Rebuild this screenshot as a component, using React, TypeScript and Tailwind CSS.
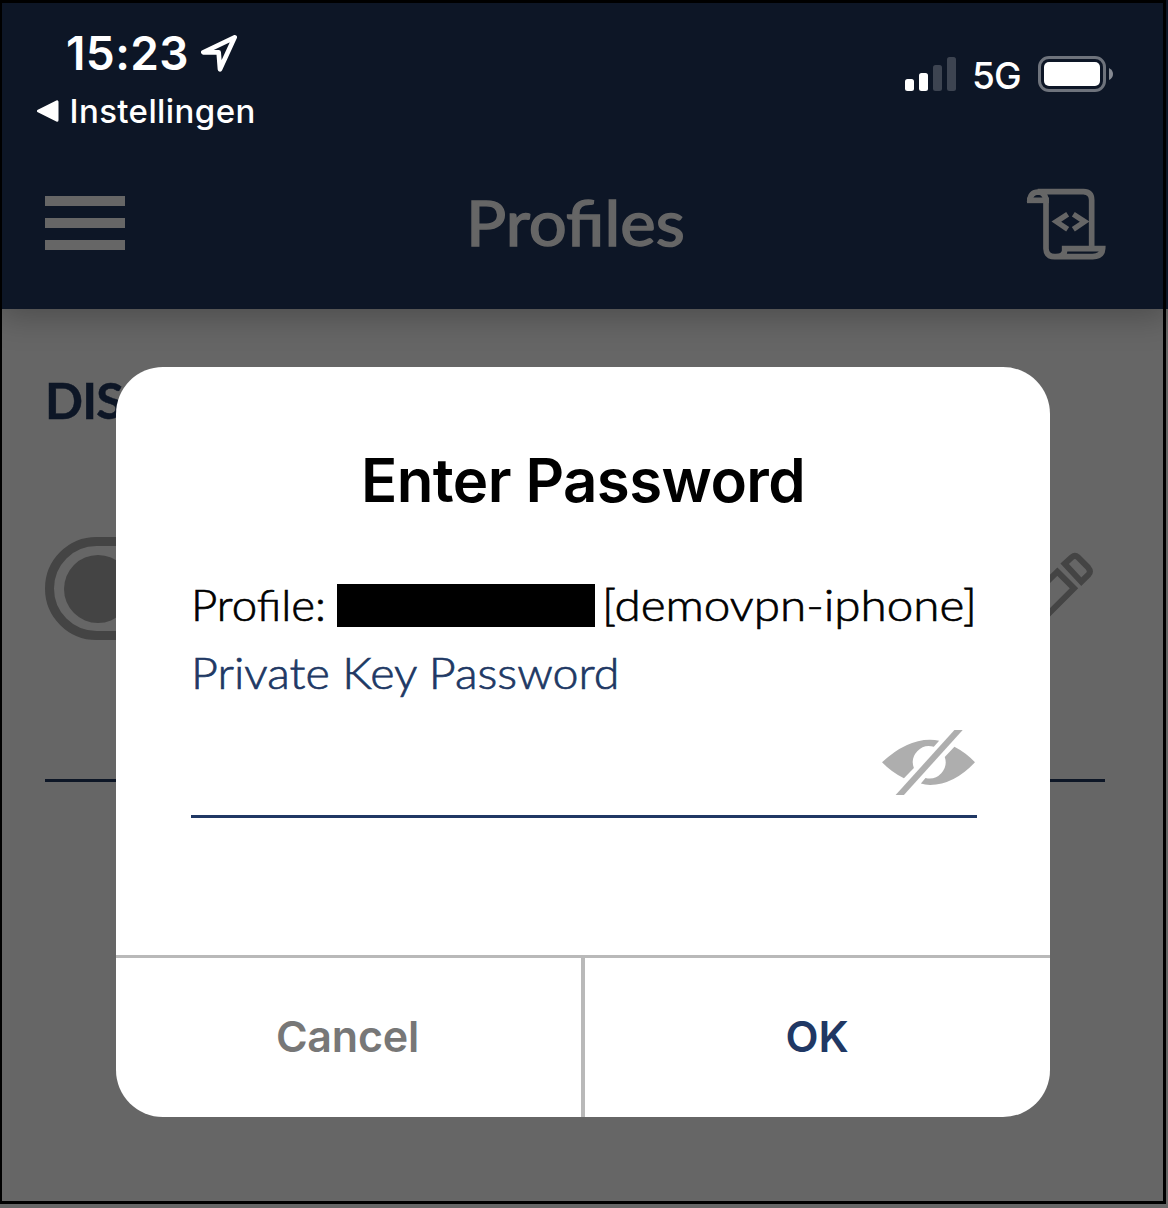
function StatusBar() {
  return (
    <div className="flex h-[150px] justify-between pl-[37px] pr-[55px] font-['Inter',sans-serif] text-white">
      <div className="pt-[28px]">
        <div className="flex h-[50px] items-center pl-[29px]">
          <span className="w-[135px] whitespace-nowrap text-[46px] font-semibold leading-[50px] tracking-[0.4px]">15:23</span>
          <svg className="h-[37px] w-[36px] shrink-0" viewBox="603 104 108 111" fill="none">
            <path d="M704 111 L610 156 H656 L660 207 Z" stroke="white" strokeWidth="14" strokeLinejoin="round" />
          </svg>
        </div>
        <div className="mt-[9px] flex h-[48px] items-center">
          <svg className="h-[22px] w-[22px] shrink-0" viewBox="0 0 22 22">
            <path d="M1.5 11 L20 1.8 V20.2 Z" fill="white" stroke="white" strokeWidth="3" strokeLinejoin="round" />
          </svg>
          <span className="ml-[10.5px] whitespace-nowrap text-[33px] font-medium leading-[48px] tracking-[0.4px]">Instellingen</span>
        </div>
      </div>
      <div className="box-content flex h-[40px] items-center pt-[54px]">
        <div className="flex h-[34px] items-end gap-[5px]">
          <span className="h-[12px] w-[9px] rounded-[2.5px] bg-white" />
          <span className="h-[18px] w-[9px] rounded-[2.5px] bg-white" />
          <span className="h-[26px] w-[9px] rounded-[2.5px] bg-[#3d4451]" />
          <span className="h-[34px] w-[9px] rounded-[2.5px] bg-[#3d4451]" />
        </div>
        <span className="ml-[16px] mt-[4px] w-[66px] whitespace-nowrap text-[37px] font-medium leading-[40px] tracking-[-0.8px]">5G</span>
        <div className="-mt-[1px] h-[36px] w-[68px] rounded-[11px] border-[3px] border-[#6e737c] p-[3px]">
          <div className="h-full rounded-[5px] bg-white" />
        </div>
        <svg className="ml-[3px] h-[12px] w-[4px]" viewBox="0 0 4 12">
          <path d="M0 0 Q4 2 4 6 T0 12 Z" fill="#868a92" />
        </svg>
      </div>
    </div>
  );
}

function ScrollIcon() {
  return (
    <svg className="mt-[2px] h-[73px] w-[82px]" viewBox="78 52 246 219" fill="none" stroke="#666666" strokeWidth="17">
      <path d="M113 63 H250 Q275 64 275 88 V232" />
      <path d="M81 89 H147" />
      <path d="M89 94 Q90 64 115 64 Q138 65 138 94 V234 Q139 258 164 258 H278 Q307 257 308 234 H194 V240 Q193 257 168 258" />
      <path d="M203 131 L169 153 L203 176 M220 131 L254 153 L220 176" strokeWidth="16" />
    </svg>
  );
}

function Header() {
  return (
    <header className="h-[309px] bg-[#0d1626] shadow-[0_8px_30px_rgba(0,0,0,0.25)]">
      <StatusBar />
      <div className="flex h-[146px] items-center justify-between pl-[45px] pr-[60px]">
        <div className="flex w-20 flex-col gap-3">
          <span className="h-[10px] bg-[#666666]" />
          <span className="h-[10px] bg-[#666666]" />
          <span className="h-[10px] bg-[#666666]" />
        </div>
        <h1 className="w-[220px] origin-left scale-x-[1.1] whitespace-nowrap font-['Lato',sans-serif] text-[61px] leading-[70px] text-[#666666] [-webkit-text-stroke:1.5px_#666666]">Profiles</h1>
        <ScrollIcon />
      </div>
    </header>
  );
}

function PencilIcon() {
  return (
    <svg className="h-[83px] w-[84px]" viewBox="448 96 252 249" fill="none" stroke="#444444" strokeWidth="18">
      <path d="M612 131 L634 111 Q643 104 651 111 L682 142 Q692 154 684 163 L662 185 Z" />
      <path d="M590 155 L640 205 L520 325 L460 337 L468 275 Z" />
    </svg>
  );
}

function EyeOffIcon() {
  return (
    <svg className="h-[65px] w-[93px] shrink-0" viewBox="66 630 280 195" fill="#aeaeae">
      <path d="M66 727 Q139 659 210 659 Q226 659 238 662 L222 680 A49 49 0 0 0 162 744 L132 775 Q96 758 66 727 Z" />
      <path d="M284 680 Q319 698 346 727 Q282 795 211 795 Q195 795 183 791 L197 774 A49 49 0 0 0 255 711 Z" />
      <path d="M284 630 H309 L132 825 H107 Z" />
    </svg>
  );
}

function PasswordDialog() {
  return (
    <div className="absolute left-[116px] top-[367px] flex h-[750px] w-[934px] flex-col overflow-hidden rounded-[47px] bg-white">
      <div className="flex h-[588px] flex-col pl-[75px] pr-[73px] pt-[78px]">
        <h2 className="h-[70px] whitespace-nowrap pr-[2px] text-center font-['Inter',sans-serif] text-[60px] font-semibold leading-[70px] tracking-[-0.6px]">Enter Password</h2>
        <div className="mt-[60px] flex h-[60px] items-center font-['Lato',sans-serif] text-[43px] font-light leading-[60px] text-black [-webkit-text-stroke:0.7px_black]">
          <span className="w-[146px] origin-left scale-x-[1.06] whitespace-nowrap">Profile:</span>
          <span className="h-[43px] w-[258px] bg-black" />
          <span className="ml-[7px] origin-left scale-x-[1.107] whitespace-nowrap">[demovpn-iphone]</span>
        </div>
        <label className="mt-[8px] h-[60px] origin-left scale-x-[1.084] self-start whitespace-nowrap font-['Lato',sans-serif] text-[43px] font-light leading-[60px] text-[#203864] [-webkit-text-stroke:0.7px_#203864]">Private Key Password</label>
        <div className="mt-[27px] flex h-[88px] items-start justify-end border-b-[3px] border-[#203864] pr-[2px]">
          <EyeOffIcon />
        </div>
      </div>
      <div className="flex flex-1 border-t-[3px] border-[#b9b9b9] font-['Inter',sans-serif] text-[43px] font-semibold tracking-[-0.2px]">
        <button className="w-[465px] pb-[2px] pr-[2px] text-[#777777]">Cancel</button>
        <button className="flex-1 border-l-4 border-[#b9b9b9] pb-[2px] pr-[1px] text-[#203864]">OK</button>
      </div>
    </div>
  );
}

export default function App() {
  return (
    <div className="relative h-[1208px] w-[1168px] overflow-hidden bg-[#666666]">
      <Header />
      <main className="px-[45px] pt-[61px]">
        <h2 className="h-[60px] w-[80px] overflow-hidden whitespace-nowrap font-['Lato',sans-serif] text-[50px] font-bold leading-[60px] tracking-[-0.8px] text-[#0d1626] [-webkit-text-stroke:0.5px_#0d1626]">DIS</h2>
        <div className="mr-[18px] flex h-[352px] items-start justify-between pt-[107px]">
          <div className="h-[103px] w-[176px] rounded-full border-[9px] border-[#444444] p-[9px] pl-[10px]">
            <div className="h-[68px] w-[68px] rounded-full bg-[#444444]" />
          </div>
          <div className="-mr-[1px] pr-[12px] pt-[15px]">
            <PencilIcon />
          </div>
        </div>
        <div className="-mt-[3px] mr-[18px] h-[3px] bg-[#0d1626]" />
      </main>
      <PasswordDialog />
      <div className="pointer-events-none absolute left-0 top-0 h-[1204px] w-[1166px] border-[3px] border-l-2 border-black" />
    </div>
  );
}
